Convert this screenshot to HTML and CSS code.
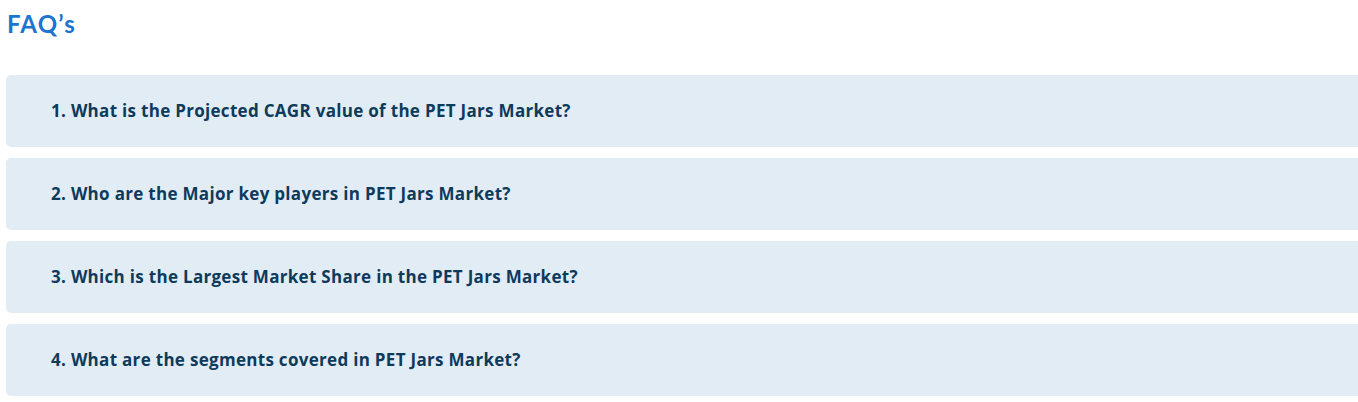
FILE: index.html
```html
<!DOCTYPE html>
<html lang="en">
<head>
    <meta charset="UTF-8">
    <meta name="viewport" content="width=device-width, initial-scale=1.0">
    <title>FAQ's</title>
    <link rel="stylesheet" href="styles.css">
</head>
<body>
    <div class="faq">
        <h2 class="faq-title">FAQ’s</h2>

        <div class="faq-list">
            <div class="faq-item">
                <p>1. What is the Projected CAGR value of the PET Jars Market?</p>
            </div>
            <div class="faq-item">
                <p>2. Who are the Major key players in PET Jars Market?</p>
            </div>
            <div class="faq-item">
                <p>3. Which is the Largest Market Share in the PET Jars Market?</p>
            </div>
            <div class="faq-item">
                <p>4. What are the segments covered in PET Jars Market?</p>
            </div>
        </div>
    </div>
</body>
</html>
```

FILE: styles.css
```css
body {
    margin: 0;
    font-family: Lato, "Open Sans", Arial, sans-serif;
    background-color: #fff;
    overflow: hidden;
}

.faq {
    padding: 10px 0 0 6px;
}

.faq-title {
    margin: 0 0 0 1px;
    font-size: 24px;
    font-weight: 700;
    color: #1b75cf;
    line-height: 28px;
    letter-spacing: 1.2px;
}

.faq-list {
    display: flex;
    flex-direction: column;
    gap: 11px;
    margin-top: 37px;
}

.faq-item {
    height: 72px;
    margin-right: -10px;
    display: flex;
    align-items: center;
    padding-left: 45px;
    padding-bottom: 1px;
    box-sizing: border-box;
    background-color: #e2ecf5;
    border-radius: 5px;
}

.faq-item p {
    margin: 0;
    font-family: "Open Sans", Lato, sans-serif;
    font-size: 17px;
    font-weight: 700;
    letter-spacing: 0.3px;
    color: #0e3a5c;
}
```
